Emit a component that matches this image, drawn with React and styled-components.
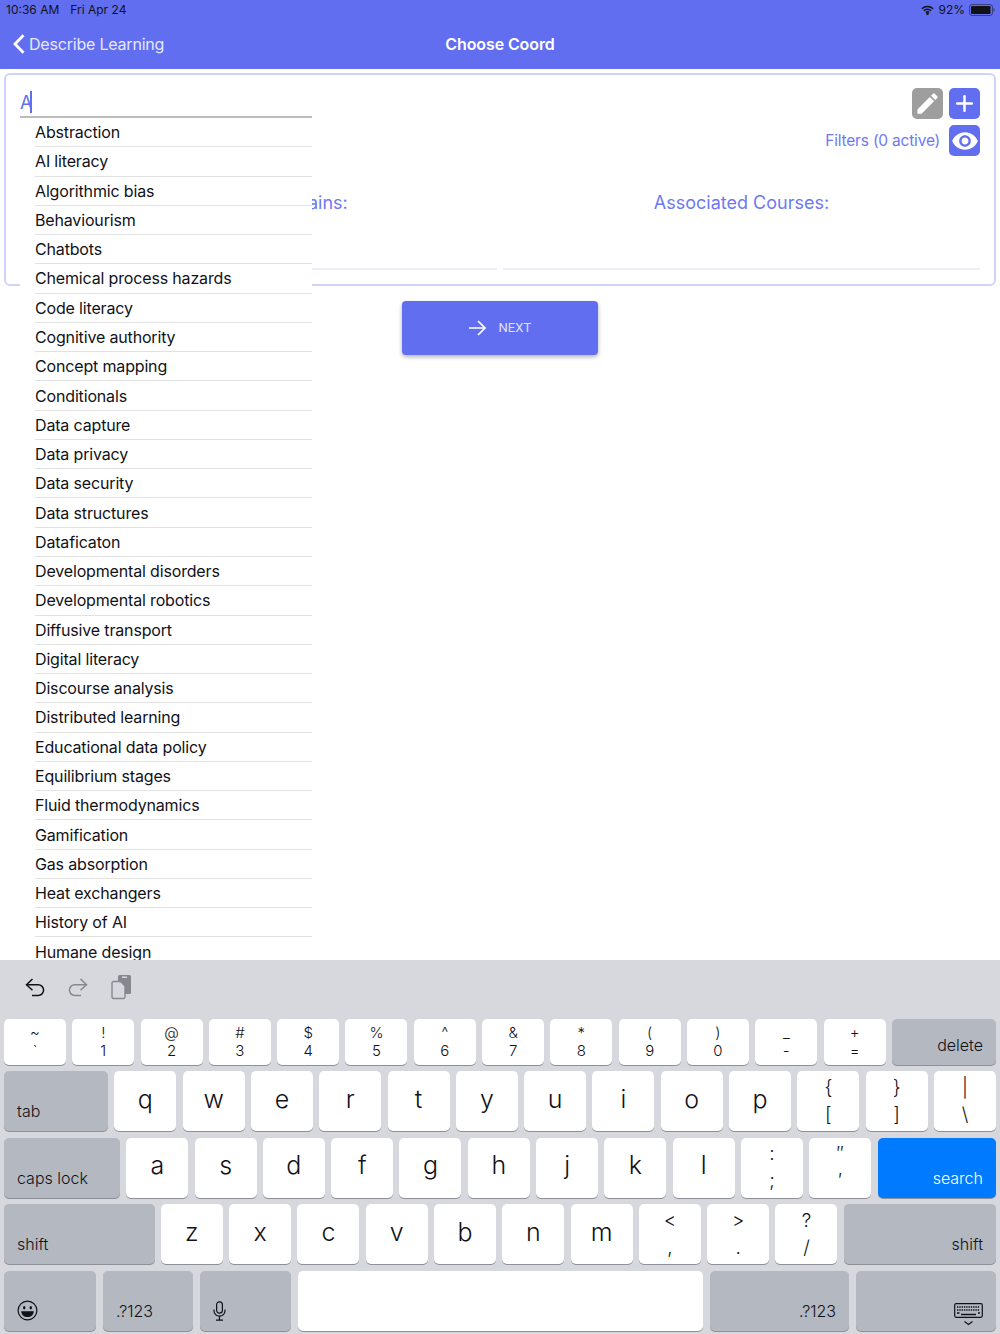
import React from 'react';
import styled, { createGlobalStyle } from 'styled-components';
import { Plus } from 'lucide-react';

const INDIGO = '#626ef0';
const INK = '#111218';

const topics = [
  'Abstraction', 'AI literacy', 'Algorithmic bias', 'Behaviourism', 'Chatbots',
  'Chemical process hazards', 'Code literacy', 'Cognitive authority', 'Concept mapping',
  'Conditionals', 'Data capture', 'Data privacy', 'Data security', 'Data structures',
  'Dataficaton', 'Developmental disorders', 'Developmental robotics', 'Diffusive transport',
  'Digital literacy', 'Discourse analysis', 'Distributed learning', 'Educational data policy',
  'Equilibrium stages', 'Fluid thermodynamics', 'Gamification', 'Gas absorption',
  'Heat exchangers', 'History of AI', 'Humane design',
];

const numberRow = [
  ['~', '`'], ['!', '1'], ['@', '2'], ['#', '3'], ['$', '4'], ['%', '5'], ['^', '6'],
  ['&', '7'], ['*', '8'], ['(', '9'], [')', '0'], ['_', '-'], ['+', '='],
];

const GlobalStyle = createGlobalStyle`
  html, body {
    margin: 0;
    padding: 0;
    background: #fff;
    font-family: Inter, "Liberation Sans", sans-serif;
  }
`;

const Page = styled.div`
  width: 1000px;
  height: 1334px;
  display: flex;
  flex-direction: column;
  overflow: hidden;
`;

const Header = styled.header`
  height: 69px;
  flex: none;
  background: ${INDIGO};
`;

const StatusBar = styled.div`
  height: 19px;
  padding: 0 5px 0 6px;
  display: flex;
  align-items: center;
  justify-content: space-between;
  font-size: 12px;
  color: ${INK};
`;

const StatusGroup = styled.div`
  display: flex;
  align-items: center;
  gap: ${(p) => p.$gap}px;
`;

const NavBar = styled.div`
  height: 50px;
  display: grid;
  grid-template-columns: 1fr auto 1fr;
  align-items: center;
`;

const BackLink = styled.div`
  display: flex;
  align-items: center;
  gap: 4px;
  padding-left: 13px;
  font-size: 16px;
  letter-spacing: -0.2px;
  color: #e6e8fd;
`;

const NavTitle = styled.div`
  font-size: 16px;
  font-weight: 600;
  letter-spacing: -0.1px;
  color: #fff;
`;

const Main = styled.main`
  flex: 1;
  min-height: 0;
  padding: 4px 4px 0;
  overflow: hidden;
`;

const Card = styled.section`
  height: 213px;
  box-sizing: border-box;
  padding: 13px 14px 14px;
  border: 2px solid #cfd2fa;
  border-radius: 6px;
  display: flex;
  flex-direction: column;
`;

const TopRow = styled.div`
  display: flex;
  justify-content: space-between;
  align-items: flex-start;
`;

const SearchField = styled.div`
  position: relative;
  width: 292px;
  height: 30px;
  box-sizing: border-box;
  border-bottom: 2px solid #bdbdbd;
  display: flex;
  align-items: center;
  font-size: 18px;
  color: ${INDIGO};
`;

const Caret = styled.span`
  width: 2px;
  height: 22px;
  margin-left: -2px;
  background: ${INDIGO};
`;

const Suggestions = styled.ul`
  position: absolute;
  top: calc(100% + 2px);
  left: 0;
  right: 0;
  z-index: 2;
  margin: 0;
  padding: 0 0 0 15px;
  list-style: none;
  background: #fff;
`;

const Suggestion = styled.li`
  height: 29.28px;
  box-sizing: border-box;
  border-bottom: 1px solid #e2e2e2;
  display: flex;
  align-items: center;
  font-size: 16px;
  letter-spacing: -0.16px;
  color: ${INK};
`;

const Tools = styled.div`
  display: flex;
  flex-direction: column;
  align-items: flex-end;
  gap: 6px;
`;

const ToolRow = styled.div`
  display: flex;
  align-items: center;
  gap: ${(p) => p.$gap}px;
`;

const ToolButton = styled.button`
  width: 31px;
  height: 31px;
  padding: 0;
  border: 0;
  border-radius: 5px;
  display: flex;
  align-items: center;
  justify-content: center;
  color: #fff;
  background: ${(p) => (p.$muted ? '#9e9e9e' : INDIGO)};
`;

const FilterText = styled.span`
  padding-bottom: 1px;
  font-size: 15.5px;
  letter-spacing: -0.2px;
  color: #6d79f2;
`;

const Columns = styled.div`
  flex: 1;
  margin-top: 36px;
  display: grid;
  grid-template-columns: 1fr 1fr;
  gap: 6px;
`;

const Column = styled.div`
  border-bottom: 2px solid #eceefc;
  text-align: center;
  font-size: 18px;
  line-height: 22px;
  color: #6d79f2;
`;

const NextButton = styled.button`
  display: flex;
  align-items: center;
  justify-content: center;
  gap: 13px;
  width: 196px;
  height: 54px;
  margin: 15px auto 0;
  padding: 0 0 1px;
  border: 0;
  border-radius: 4px;
  background: ${INDIGO};
  box-shadow: 0 2px 4px rgba(0, 0, 0, 0.3);
  font-family: Roboto, sans-serif;
  font-size: 13px;
  letter-spacing: 0.1px;
  color: #dfe2fd;
`;

const Keyboard = styled.section`
  height: 374px;
  flex: none;
  box-sizing: border-box;
  padding: 0 4px;
  background: #d6d8de;
  display: flex;
  flex-direction: column;
  gap: 6.5px;
`;

const KeyToolbar = styled.div`
  height: 52.5px;
  flex: none;
  display: flex;
  align-items: center;
  gap: 23px;
  padding: 2px 0 0 21px;
  box-sizing: border-box;
`;

const KeyRow = styled.div`
  display: flex;
  gap: ${(p) => p.$gap || 6.3}px;
  flex: none;
  height: ${(p) => p.$height || 60}px;
`;

const Key = styled.div`
  flex: ${(p) => (p.$width ? `0 0 ${p.$width}px` : '0 0 62px')};
  box-sizing: border-box;
  border-radius: 5px;
  box-shadow: 0 1px 0 #8d9097;
  background: #fff;
  color: ${INK};
  display: flex;
  flex-direction: column;
  align-items: center;
  justify-content: center;
`;

const LetterKey = styled(Key)`
  font-size: 25px;
  font-weight: 300;
  padding-bottom: 5px;
`;

const PairKey = styled(Key)`
  font-size: ${(p) => (p.$small ? 15 : 19)}px;
  font-weight: 300;
  line-height: ${(p) => (p.$small ? 18 : 27)}px;
  padding-bottom: ${(p) => (p.$small ? 0 : 1)}px;
`;

const ActionKey = styled(Key)`
  background: ${(p) => (p.$primary ? '#007aff' : '#b4b8c1')};
  color: ${(p) => (p.$primary ? '#fff' : INK)};
  align-items: ${(p) => (p.$right ? 'flex-end' : 'flex-start')};
  justify-content: flex-end;
  padding: 0 13px 10px;
  font-size: 16px;
  font-weight: 300;
  line-height: 20px;
`;

const KeyboardIcon = styled.svg`
  margin-bottom: -5px;
`;

const Pencil = () => (
  <svg width="27" height="27" viewBox="0 0 24 24" fill="currentColor">
    <path d="M3 17.25V21h3.75L17.81 9.94l-3.75-3.75L3 17.25zM20.71 7.04c.39-.39.39-1.02 0-1.41l-2.34-2.34c-.39-.39-1.02-.39-1.41 0l-1.83 1.83 3.75 3.75 1.83-1.83z" />
  </svg>
);

const Eye = () => (
  <svg width="28" height="28" viewBox="0 0 24 24" fill="currentColor">
    <path d="M12 4.5C7 4.5 2.73 7.61 1 12c1.73 4.39 6 7.5 11 7.5s9.27-3.11 11-7.5c-1.73-4.39-6-7.5-11-7.5zM12 17c-2.76 0-5-2.24-5-5s2.24-5 5-5 5 2.24 5 5-2.24 5-5 5zm0-8c-1.66 0-3 1.34-3 3s1.34 3 3 3 3-1.34 3-3-1.34-3-3-3z" />
  </svg>
);

const Wifi = () => (
  <svg width="13" height="10" viewBox="0 0 15 11" fill="none" stroke={INK} strokeWidth="1.8">
    <path d="M1 4a9.4 9.4 0 0 1 13 0" />
    <path d="M3.3 6.3a6 6 0 0 1 8.4 0" />
    <path d="M5.5 8.4a3 3 0 0 1 4 0" />
    <circle cx="7.5" cy="9.8" r="0.6" fill={INK} />
  </svg>
);

const Battery = () => (
  <svg width="26" height="12" viewBox="0 0 26 12">
    <rect x="0.5" y="0.5" width="23" height="11" rx="2.5" fill="none" stroke={INK} strokeOpacity="0.5" />
    <rect x="2" y="2" width="19.5" height="8" rx="1.2" fill={INK} />
    <path d="M24.5 4v4c.8-.3 1.2-1 1.2-2s-.4-1.7-1.2-2z" fill={INK} fillOpacity="0.5" />
  </svg>
);

const BackChevron = () => (
  <svg width="12" height="20" viewBox="0 0 12 20" fill="none" stroke="#fff" strokeWidth="2.8">
    <path d="M10.5 1.2 2 10l8.5 8.8" />
  </svg>
);

const Undo = ({ color, flip }) => (
  <svg width="20" height="19" viewBox="0 0 20 19" fill="none" stroke={color} strokeWidth="1.5" style={flip ? { transform: 'scaleX(-1)' } : undefined}>
    <path d="M7.5 1 1.5 6.8l6 5.4" />
    <path d="M1.8 6.8h11.5a5.2 5.2 0 0 1 0 10.6H7" />
  </svg>
);

const Clipboard = () => (
  <svg width="21" height="26" viewBox="0 0 21 26">
    <rect x="7" y="1" width="13" height="19" rx="1.5" fill="#85888f" />
    <rect x="11" y="2.5" width="5" height="1.5" fill="#d6d8de" />
    <path d="M2.5 7.5h7l4.5 4.5v11a1.5 1.5 0 0 1-1.5 1.5h-10A1.5 1.5 0 0 1 1 23V9a1.5 1.5 0 0 1 1.5-1.5z" fill="#d6d8de" stroke="#85888f" strokeWidth="1.4" />
  </svg>
);

const NextArrow = () => (
  <svg width="17" height="16" viewBox="0 0 17 16" fill="none" stroke="#fff" strokeWidth="1.7">
    <path d="M0 8h15.5M9 1l7 7-7 7" />
  </svg>
);

const Smiley = () => (
  <svg width="21" height="21" viewBox="0 0 21 21" fill="none" stroke={INK} strokeWidth="1.2">
    <circle cx="10.5" cy="10.5" r="9.4" />
    <ellipse cx="7.2" cy="7.8" rx="1.2" ry="1.7" fill={INK} stroke="none" />
    <ellipse cx="13.8" cy="7.8" rx="1.2" ry="1.7" fill={INK} stroke="none" />
    <path d="M4.2 11.3h12.6c-.3 3.6-2.8 5.8-6.3 5.8s-6-2.2-6.3-5.8z" fill={INK} stroke="none" />
  </svg>
);

const Mic = () => (
  <svg width="13" height="20" viewBox="0 0 13 20" fill="none" stroke={INK} strokeWidth="1.2">
    <rect x="3.6" y="0.8" width="5.8" height="11.4" rx="2.9" />
    <path d="M1 8.5v1.2a5.5 5.5 0 0 0 11 0V8.5M6.5 15.2v3.6M3 19.2h7" />
  </svg>
);

const KeyboardGlyph = () => (
  <KeyboardIcon width="29" height="23" viewBox="0 0 29 23" fill="none" stroke={INK}>
    <rect x="0.7" y="0.7" width="27.6" height="13.6" rx="1.5" strokeWidth="1.2" />
    <path d="M3 4h23M3 7h23" strokeWidth="1.6" strokeDasharray="1.4 0.9" />
    <path d="M3 10h2.5M7 11.5h15M24 10h2" strokeWidth="1.6" />
    <path d="M10.5 18.5l4 3 4-3" strokeWidth="1.1" />
  </KeyboardIcon>
);

const Pair = ({ top, bottom, small }) => (
  <PairKey $small={small}>
    <span>{top}</span>
    <span>{bottom}</span>
  </PairKey>
);

const letters = (str) => str.split('').map((c) => <LetterKey key={c}>{c}</LetterKey>);

const App = () => {
  return (
    <Page>
      <GlobalStyle />

      <Header>
        <StatusBar>
          <StatusGroup $gap={11}>
            <span>10:36 AM</span>
            <span>Fri Apr 24</span>
          </StatusGroup>
          <StatusGroup $gap={4}>
            <Wifi />
            <span>92%</span>
            <Battery />
          </StatusGroup>
        </StatusBar>
        <NavBar>
          <BackLink>
            <BackChevron />
            Describe Learning
          </BackLink>
          <NavTitle>Choose Coord</NavTitle>
        </NavBar>
      </Header>

      <Main>
        <Card>
          <TopRow>
            <SearchField>
              A<Caret />
              <Suggestions>
                {topics.map((t) => (
                  <Suggestion key={t}>{t}</Suggestion>
                ))}
              </Suggestions>
            </SearchField>
            <Tools>
              <ToolRow $gap={6}>
                <ToolButton $muted><Pencil /></ToolButton>
                <ToolButton><Plus size={25} strokeWidth={2.4} /></ToolButton>
              </ToolRow>
              <ToolRow $gap={9}>
                <FilterText>Filters (0 active)</FilterText>
                <ToolButton><Eye /></ToolButton>
              </ToolRow>
            </Tools>
          </TopRow>
          <Columns>
            <Column>Associated Domains:</Column>
            <Column>Associated Courses:</Column>
          </Columns>
        </Card>

        <NextButton>
          <NextArrow />
          NEXT
        </NextButton>
      </Main>

      <Keyboard>
        <KeyToolbar>
          <Undo color={INK} />
          <Undo color="#85888f" flip />
          <Clipboard />
        </KeyToolbar>

        <KeyRow $height={45.5}>
          {numberRow.map(([a, b]) => (
            <Pair key={a} top={a} bottom={b} small />
          ))}
          <ActionKey $width={104.1} $right>delete</ActionKey>
        </KeyRow>

        <KeyRow>
          <ActionKey $width={104.1}>tab</ActionKey>
          {letters('qwertyuiop')}
          <Pair top="{" bottom="[" />
          <Pair top="}" bottom="]" />
          <Pair top="|" bottom="\" />
        </KeyRow>

        <KeyRow>
          <ActionKey $width={116}>caps lock</ActionKey>
          {letters('asdfghjkl')}
          <Pair top=":" bottom=";" />
          <Pair top="″" bottom="′" />
          <ActionKey $width={118.4} $right $primary>search</ActionKey>
        </KeyRow>

        <KeyRow>
          <ActionKey $width={150.5}>shift</ActionKey>
          {letters('zxcvbnm')}
          <Pair top="<" bottom="," />
          <Pair top=">" bottom="." />
          <Pair top="?" bottom="/" />
          <ActionKey $width={152.2} $right>shift</ActionKey>
        </KeyRow>

        <KeyRow $gap={7}>
          <ActionKey $width={92}><Smiley /></ActionKey>
          <ActionKey $width={90}>.?123</ActionKey>
          <ActionKey $width={91}><Mic /></ActionKey>
          <Key $width={405} />
          <ActionKey $width={139} $right>.?123</ActionKey>
          <ActionKey $width={140} $right><KeyboardGlyph /></ActionKey>
        </KeyRow>
      </Keyboard>
    </Page>
  );
};

export default App;
